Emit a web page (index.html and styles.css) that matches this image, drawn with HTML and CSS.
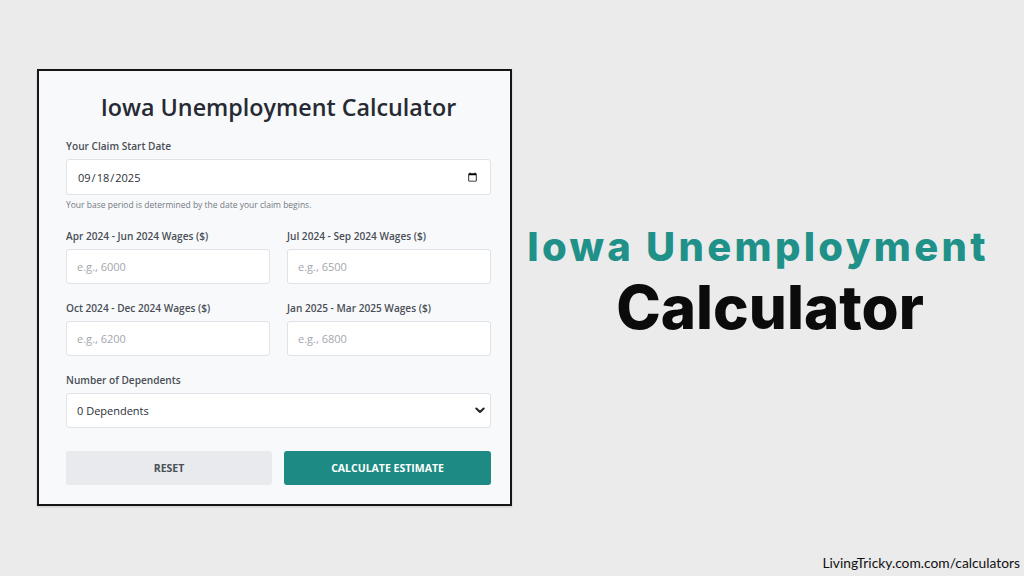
FILE: index.html
```html
<!DOCTYPE html>
<html lang="en">
<head>
<meta charset="utf-8">
<title>Iowa Unemployment Calculator</title>
<link rel="stylesheet" href="styles.css">
</head>
<body>
<div class="page">
  <div class="main">
    <form class="card">
      <h1 class="card-title">Iowa Unemployment Calculator</h1>
      <div class="field">
        <label class="label">Your Claim Start Date</label>
        <input class="input" type="date" value="2025-09-18">
        <p class="help">Your base period is determined by the date your claim begins.</p>
      </div>
      <div class="grid">
        <div class="field">
          <label class="label">Apr 2024 - Jun 2024 Wages ($)</label>
          <input class="input" type="text" placeholder="e.g., 6000">
        </div>
        <div class="field">
          <label class="label">Jul 2024 - Sep 2024 Wages ($)</label>
          <input class="input" type="text" placeholder="e.g., 6500">
        </div>
        <div class="field">
          <label class="label">Oct 2024 - Dec 2024 Wages ($)</label>
          <input class="input" type="text" placeholder="e.g., 6200">
        </div>
        <div class="field">
          <label class="label">Jan 2025 - Mar 2025 Wages ($)</label>
          <input class="input" type="text" placeholder="e.g., 6800">
        </div>
      </div>
      <div class="field field-dep">
        <label class="label">Number of Dependents</label>
        <div class="select-wrap">
          <select class="input select">
            <option>0 Dependents</option>
            <option>1 Dependent</option>
            <option>2 Dependents</option>
          </select>
          <svg class="chev" width="10" height="7" viewBox="0 0 10 7"><path d="M1.3 1.5 L5 5 L8.7 1.5" fill="none" stroke="#222" stroke-width="2" stroke-linecap="round" stroke-linejoin="round"/></svg>
        </div>
      </div>
      <div class="buttons">
        <button type="button" class="btn btn-reset">Reset</button>
        <button type="button" class="btn btn-calc">Calculate Estimate</button>
      </div>
    </form>
    <div class="hero">
      <div class="hero-line1">Iowa Unemployment</div>
      <div class="hero-line2">Calculator</div>
    </div>
  </div>
  <div class="footer">LivingTricky.com.com/calculators</div>
</div>
</body>
</html>
```
FILE: styles.css
```css
* { box-sizing: border-box; }
html, body { margin: 0; padding: 0; }
body {
  background: #ebebeb;
  font-family: "Open Sans", "Noto Sans", sans-serif;
}
.page {
  width: 1024px;
  height: 576px;
  display: flex;
  flex-direction: column;
}
.main {
  display: flex;
  align-items: flex-start;
  padding: 69px 0 0 37px;
  flex: 1;
}
.card {
  width: 475px;
  height: 437px;
  border: 2px solid #161616;
  background: #f8f9fa;
  box-shadow: 0 1px 2px rgba(0,0,0,0.15);
  padding: 21px 19px 0 27px;
  display: flex;
  flex-direction: column;
}
.card-title {
  margin: 0;
  font-size: 23.3px;
  line-height: 30px;
  font-weight: 600;
  color: #262b33;
  text-align: center;
}
.field { display: flex; flex-direction: column; }
.card-title + .field { margin-top: 17px; }
.label {
  font-size: 10.1px;
  line-height: 15px;
  font-weight: 600;
  color: #4a4f57;
  margin-bottom: 5px;
}
.input {
  height: 36px;
  border: 1px solid #dfe2e6;
  border-radius: 3px;
  background: #fff;
  padding: 0 10px;
  font-family: "Open Sans", "Noto Sans", sans-serif;
  font-size: 11px;
  color: #2b2f36;
  outline: none;
  width: 100%;
}
.input::placeholder { color: #a3a7ad; }
.help {
  margin: 4px 0 0;
  font-size: 8.5px;
  line-height: 12px;
  color: #737a83;
}
.grid {
  margin-top: 18px;
  display: grid;
  grid-template-columns: 1fr 1fr;
  column-gap: 17px;
  row-gap: 17px;
}
.grid .input { height: 35px; }
.field-dep { margin-top: 17px; }
.select-wrap { position: relative; }
.select {
  appearance: none;
  -webkit-appearance: none;
  height: 35px;
  color: #2b2f36;
}
.chev {
  position: absolute;
  right: 6px;
  top: 14px;
}
.buttons {
  margin-top: 23px;
  display: grid;
  grid-template-columns: 206px 207px;
  column-gap: 12px;
}
.btn {
  height: 34px;
  border: none;
  border-radius: 3px;
  font-family: "Open Sans", "Noto Sans", sans-serif;
  font-size: 10.5px;
  font-weight: 700;
  text-transform: uppercase;
}
.btn-reset { background: #e8eaed; color: #4a4f57; }
.btn-calc { background: #1d8b83; color: #fff; }
.hero {
  flex: 1;
  display: flex;
  flex-direction: column;
  align-items: center;
  padding-top: 154px;
  font-family: "Inter", sans-serif;
  font-weight: 800;
}
.hero-line1 {
  color: #1f9189;
  font-size: 40px;
  line-height: 48px;
  letter-spacing: 3.3px;
  padding-right: 20px;
}
.hero-line2 {
  color: #0b0b0b;
  font-size: 60px;
  line-height: 72px;
  padding-left: 4px;
}
.footer {
  align-self: flex-end;
  padding: 0 4px 6px 0;
  font-family: "Lato", sans-serif;
  font-size: 13.8px;
  line-height: 14px;
  color: #111;
}
```
